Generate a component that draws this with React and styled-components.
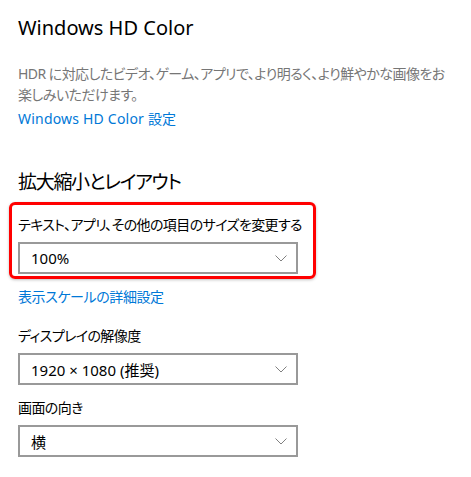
import React from 'react'
import styled, { createGlobalStyle } from 'styled-components'

const GlobalStyle = createGlobalStyle`
  html, body {
    margin: 0;
    padding: 0;
    background: #ffffff;
  }
  body {
    font-family: "Noto Sans", "Noto Sans CJK JP", sans-serif;
    font-feature-settings: "palt";
    color: #000;
  }
`

const Page = styled.div`
  width: 471px;
  height: 477px;
  box-sizing: border-box;
  padding: 14px 0 0 18px;
  overflow: hidden;
`

const Title = styled.h2`
  margin: 0;
  font-size: ${p => p.$size || 20}px;
  line-height: 28px;
  font-weight: 400;
  letter-spacing: ${p => p.$spacing || 0}px;
`

const Section = styled.div`
  margin-top: ${p => p.$gap || 0}px;
  display: flex;
  flex-direction: column;
  align-items: flex-start;
`

const Desc = styled.p`
  margin: 0;
  font-size: 14px;
  line-height: 21px;
  color: #767676;
  letter-spacing: -0.55px;
`

const Link = styled.a`
  margin-top: ${p => p.$gap || 0}px;
  font-size: 14px;
  line-height: 21px;
  color: #0078d7;
  text-decoration: none;
  letter-spacing: ${p => p.$spacing ?? -0.4}px;
`

const Label = styled.div`
  font-size: 14px;
  line-height: 21px;
  letter-spacing: -0.6px;
`

const Highlight = styled.div`
  position: relative;
  display: flex;
  flex-direction: column;
  align-items: flex-start;
  &::after {
    content: "";
    position: absolute;
    left: -9px;
    top: -12px;
    box-sizing: border-box;
    width: 307px;
    height: 77px;
    border: 3px solid #ff0000;
    border-radius: 6px;
    box-shadow: 0 1px 3px rgba(0, 0, 0, 0.25);
    pointer-events: none;
  }
`

const Select = styled.div`
  margin-top: 7px;
  width: 280px;
  height: 32px;
  box-sizing: border-box;
  border: 2px solid #999999;
  background: #fff;
  display: flex;
  align-items: center;
  justify-content: space-between;
  padding: 0 9px 0 11px;
  font-size: 15px;
`

const Chevron = () => (
  <svg width="12" height="7" viewBox="0 0 12 7">
    <polyline points="0.5,0.5 6,6 11.5,0.5" fill="none" stroke="#808080" strokeWidth="1" />
  </svg>
)

const Dropdown = ({ value }) => (
  <Select>
    <span>{value}</span>
    <Chevron />
  </Select>
)

export default function App() {
  return (
    <Page>
      <GlobalStyle />
      <Title>Windows HD Color</Title>
      <Section $gap={21}>
        <Desc>
          HDR に対応したビデオ、ゲーム、アプリで、より明るく、より鮮やかな画像をお
          <br />
          楽しみいただけます。
        </Desc>
        <Link href="#" $gap={3} $spacing={0.2}>Windows HD Color 設定</Link>
      </Section>
      <Section $gap={39}>
        <Title $size={19} $spacing={-1.3}>拡大縮小とレイアウト</Title>
      </Section>
      <Section $gap={18}>
        <Highlight>
          <Label>テキスト、アプリ、その他の項目のサイズを変更する</Label>
          <Dropdown value="100%" />
        </Highlight>
        <Link href="#" $gap={12}>表示スケールの詳細設定</Link>
      </Section>
      <Section $gap={18}>
        <Label>ディスプレイの解像度</Label>
        <Dropdown value="1920 × 1080 (推奨)" />
      </Section>
      <Section $gap={12}>
        <Label>画面の向き</Label>
        <Dropdown value="横" />
      </Section>
    </Page>
  )
}
